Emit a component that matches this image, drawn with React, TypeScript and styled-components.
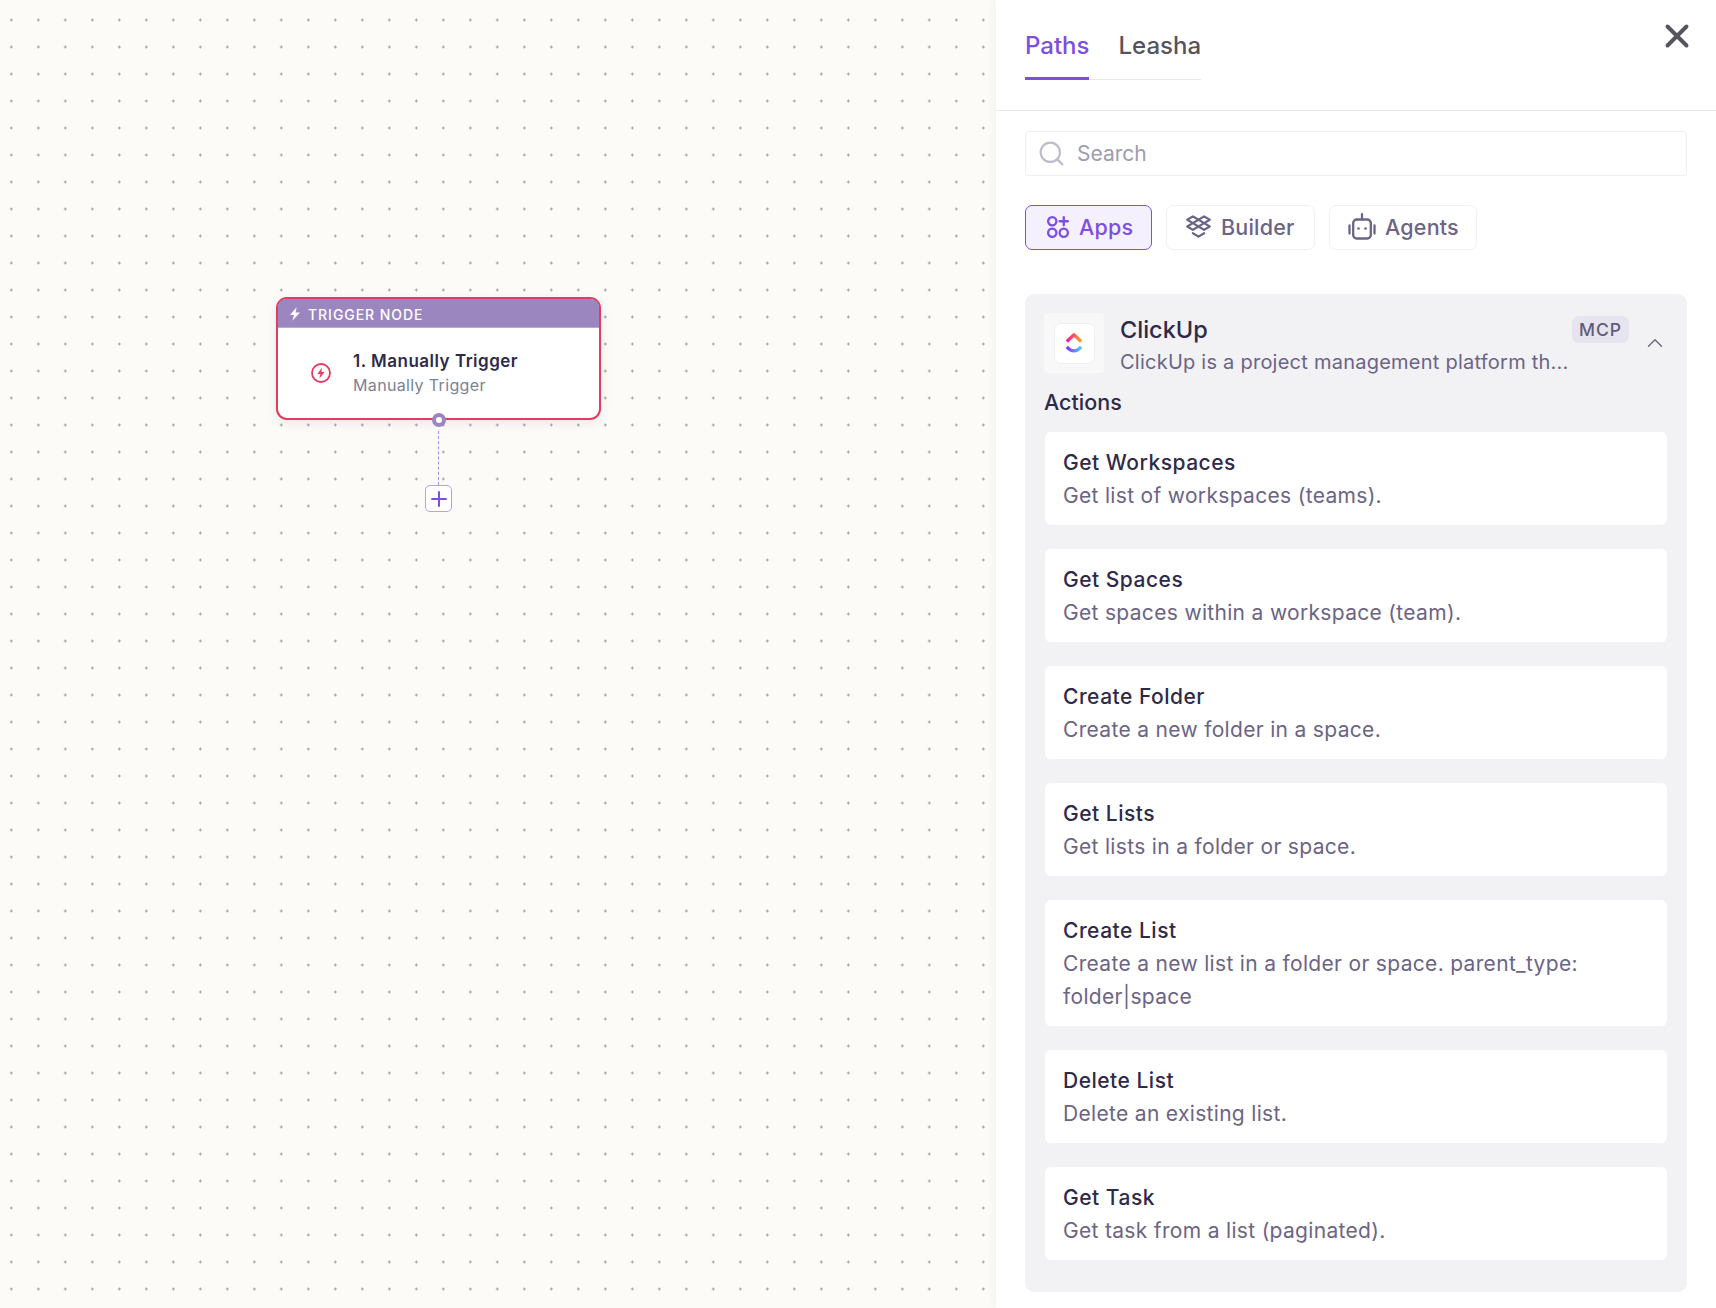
import React from "react";
import styled, { createGlobalStyle } from "styled-components";
import { Search, X, ChevronUp, Plus } from "lucide-react";

const Global = createGlobalStyle`
  html, body { margin: 0; padding: 0; height: 100%; }
  body { font-family: "Inter", "Liberation Sans", sans-serif; background: #fff; }
  * { box-sizing: border-box; }
`;

const Page = styled.div`
  display: flex;
  width: 100%;
  height: 1308px;
  overflow: hidden;
`;

const Canvas = styled.div`
  position: relative;
  flex: 0 0 996px;
  background-color: #fcfbf8;
  background-image: radial-gradient(circle, #a3a3a3 1px, transparent 1.2px);
  background-size: 27px 27px;
  background-position: -2.2px 6.5px;
`;

const Node = styled.div`
  position: absolute;
  left: 276px;
  top: 297px;
  width: 325px;
  height: 123px;
  background: #fff;
  border: 2px solid #e23d5e;
  border-radius: 11px;
  box-shadow: 0 3px 12px rgba(40, 30, 60, 0.08);
`;

const NodeHeader = styled.div`
  display: flex;
  align-items: center;
  gap: 7px;
  height: 29px;
  padding: 2px 0 0 11px;
  background: #9c86c0;
  border-radius: 8px 8px 0 0;
  border-bottom: 1px solid #b9a9d4;
  color: #fff;
  font-size: 14px;
  font-weight: 500;
  letter-spacing: 0.95px;
`;

const NodeBody = styled.div`
  display: flex;
  align-items: center;
  height: 90px;
  padding: 0 0 1px 32px;
  gap: 21px;
`;

const NodeText = styled.div`
  display: flex;
  flex-direction: column;
  gap: 1px;
`;

const NodeTitle = styled.div`
  font-size: 17px;
  line-height: 23px;
  font-weight: 600;
  letter-spacing: 0.5px;
  color: #2e2a4a;
`;

const NodeSub = styled.div`
  font-size: 16px;
  line-height: 22px;
  letter-spacing: 0.35px;
  color: #7a8299;
`;

const Port = styled.div`
  position: absolute;
  left: 153.5px;
  bottom: -8.5px;
  width: 14px;
  height: 14px;
  border-radius: 50%;
  background: #fff;
  border: 4px solid #9c86c0;
`;

const Connector = styled.div`
  position: absolute;
  left: 438px;
  top: 431px;
  height: 54px;
  border-left: 1px dashed #a78bec;
`;

const AddButton = styled.button`
  position: absolute;
  left: 425px;
  top: 485px;
  width: 27px;
  height: 27px;
  padding: 0;
  display: flex;
  align-items: center;
  justify-content: center;
  background: #fff;
  border: 1.5px solid #b49ff0;
  border-radius: 5px;
  color: #7c4fe0;
`;

const Panel = styled.div`
  flex: 1;
  position: relative;
  background: #fff;
  box-shadow: -3px 0 8px rgba(60, 50, 30, 0.04);
`;

const TopBar = styled.div`
  height: 111px;
  padding: 25px 29px 0;
  border-bottom: 1.5px solid #e8e8ec;
  display: flex;
  justify-content: space-between;
  align-items: flex-start;
`;

const Tabs = styled.div`
  display: flex;
  gap: 29px;
  height: 55px;
  border-bottom: 1.5px solid #e8e6ef;
`;

const Tab = styled.div<{ $active?: boolean }>`
  height: 55px;
  font-size: 24px;
  line-height: 41px;
  font-weight: 500;
  color: ${(p) => (p.$active ? "#7c4fe0" : "#55535f")};
  border-bottom: ${(p) => (p.$active ? "3px solid #7c4fe0" : "none")};
`;

const CloseButton = styled.div`
  position: absolute;
  right: 20px;
  top: 17px;
  display: flex;
  color: #55555f;
`;

const Content = styled.div`
  padding: 20px 29px 0;
`;

const SearchBox = styled.div`
  display: flex;
  align-items: center;
  gap: 11px;
  height: 45px;
  padding-left: 11px;
  border: 1px solid #eeeef2;
  border-radius: 4px;
  color: #bdbdc9;
`;

const SearchText = styled.span`
  font-size: 21px;
  color: #9d9dae;
`;

const Chips = styled.div`
  display: flex;
  gap: 14px;
  margin-top: 29px;
`;

const Chip = styled.div<{ $active?: boolean; $w: number }>`
  display: flex;
  align-items: center;
  gap: 9px;
  width: ${(p) => p.$w}px;
  height: 45px;
  padding: 0 0 2px ${(p) => (p.$active ? 20 : 18)}px;
  font-size: 21.5px;
  font-weight: 500;
  letter-spacing: 0.2px;
  border-radius: 7px;
  border: 1px solid ${(p) => (p.$active ? "#7c4fe0" : "#f0f0f4")};
  background: ${(p) => (p.$active ? "#f4f0fe" : "#fff")};
  color: ${(p) => (p.$active ? "#7c4fe0" : "#6b6485")};
`;

const Card = styled.div`
  margin-top: 44px;
  padding: 19px 20px 32px 19px;
  background: #f2f2f5;
  border-radius: 9px;
`;

const CardHead = styled.div`
  position: relative;
  display: flex;
  gap: 16px;
  height: 61px;
`;

const LogoBox = styled.div`
  flex: 0 0 60px;
  height: 60px;
  display: flex;
  align-items: center;
  justify-content: center;
  background: #f8f8f9;
  border-radius: 4px;
`;

const LogoInner = styled.div`
  width: 41px;
  height: 41px;
  display: flex;
  align-items: center;
  justify-content: center;
  background: #fff;
  border: 1.5px solid #efeff3;
  border-radius: 7px;
`;

const HeadText = styled.div`
  display: flex;
  flex-direction: column;
  width: 460px;
`;

const AppName = styled.div`
  font-size: 23.5px;
  line-height: 33px;
  font-weight: 500;
  color: #2e2a4a;
`;

const AppDesc = styled.div`
  margin-top: 2px;
  font-size: 20px;
  line-height: 28px;
  letter-spacing: 0.24px;
  color: #6b6485;
  white-space: nowrap;
  overflow: hidden;
`;

const Badge = styled.div`
  position: absolute;
  left: 528px;
  top: 3px;
  width: 57px;
  height: 27px;
  display: flex;
  align-items: center;
  justify-content: center;
  background: #e6e4ee;
  border-radius: 7px;
  font-size: 17.5px;
  font-weight: 500;
  letter-spacing: 1px;
  color: #5f5a78;
`;

const Chevron = styled.div`
  position: absolute;
  left: 598px;
  top: 17px;
  display: flex;
  color: #6b6b7a;
`;

const SectionLabel = styled.div`
  margin-top: 14px;
  height: 28px;
  font-size: 21.5px;
  line-height: 28px;
  font-weight: 500;
  color: #2e2a4a;
`;

const List = styled.div`
  display: flex;
  flex-direction: column;
  gap: 24px;
  margin: 16px 0 0 1px;
`;

const Item = styled.div`
  padding: 16px 18px 13px;
  background: #fff;
  border-radius: 6px;
`;

const ItemTitle = styled.div`
  font-size: 21px;
  line-height: 30px;
  font-weight: 500;
  letter-spacing: 0.5px;
  color: #2e2a4a;
`;

const ItemDesc = styled.div`
  margin-top: 1px;
  font-size: 21px;
  line-height: 33px;
  letter-spacing: 0.32px;
  color: #6b6485;
`;

const AppsIcon = () => (
  <svg width="24" height="24" viewBox="0 0 25 25" fill="none" stroke="currentColor" strokeWidth="2.4" strokeLinecap="round">
    <circle cx="6.5" cy="6.5" r="4.3" />
    <circle cx="6.5" cy="18.5" r="4.3" />
    <circle cx="18.5" cy="18.5" r="4.3" />
    <path d="M18.5 2.2v8.6M14.2 6.5h8.6" />
  </svg>
);

const DropboxIcon = () => (
  <svg width="27" height="27" viewBox="0 0 24 24" fill="none" stroke="currentColor" strokeWidth="2" strokeLinejoin="round" strokeLinecap="round">
    <path d="M12 6 7 9l5 3-5 3-5-3 5-3-5-3 5-3z" />
    <path d="M12 6l5 3-5 3 5 3 5-3-5-3 5-3-5-3z" />
    <path d="M7 18l5 3 5-3" />
  </svg>
);

const RobotIcon = () => (
  <svg width="28" height="28" viewBox="0 0 28 28" fill="none" stroke="currentColor" strokeWidth="2.3" strokeLinecap="round">
    <rect x="5.2" y="6.5" width="17.6" height="19" rx="3.5" />
    <path d="M14 1.2v5M1.5 12.5v8M26.5 12.5v8" />
    <circle cx="10.5" cy="15.5" r="1.3" fill="currentColor" stroke="none" />
    <circle cx="17.5" cy="15.5" r="1.3" fill="currentColor" stroke="none" />
  </svg>
);

const BoltSmall = () => (
  <svg width="12" height="14" viewBox="0 0 12 14" fill="#fff">
    <path d="M7.6 0.3 1 8h4l-1.6 5.7L11 5.6H6.6z" />
  </svg>
);

const BoltCircle = () => (
  <svg width="22" height="22" viewBox="0 0 22 22" fill="none">
    <circle cx="11" cy="11" r="9" stroke="#e23d5e" strokeWidth="1.8" />
    <path d="M12 5.5 7.4 12h3l-1 4.5L14.6 10h-3.2z" fill="#e23d5e" />
  </svg>
);

const ClickUpLogo = () => (
  <svg width="18" height="21.6" viewBox="0 0 20 24" fill="none">
    <defs>
      <linearGradient id="cuTop" x1="0" y1="0" x2="1" y2="0">
        <stop offset="0" stopColor="#fa12a4" />
        <stop offset="1" stopColor="#ffa114" />
      </linearGradient>
      <linearGradient id="cuBot" x1="0" y1="0" x2="1" y2="0">
        <stop offset="0" stopColor="#8930fd" />
        <stop offset="1" stopColor="#49ccf9" />
      </linearGradient>
    </defs>
    <path d="M2 10.5 10 3l8 7.500" stroke="url(#cuTop)" strokeWidth="3.6" strokeLinejoin="round" />
    <path d="M2 16.500c2.400 2.600 5 4.500 8 4.500s5.600-1.900 8-4.500" stroke="url(#cuBot)" strokeWidth="3.6" />
  </svg>
);

const actions = [
  ["Get Workspaces", "Get list of workspaces (teams)."],
  ["Get Spaces", "Get spaces within a workspace (team)."],
  ["Create Folder", "Create a new folder in a space."],
  ["Get Lists", "Get lists in a folder or space."],
  ["Create List", "Create a new list in a folder or space. parent_type: folder|space"],
  ["Delete List", "Delete an existing list."],
  ["Get Task", "Get task from a list (paginated)."],
];

export default function App() {
  return (
    <Page>
      <Global />
      <Canvas>
        <Node>
          <NodeHeader>
            <BoltSmall />
            TRIGGER NODE
          </NodeHeader>
          <NodeBody>
            <BoltCircle />
            <NodeText>
              <NodeTitle>1. Manually Trigger</NodeTitle>
              <NodeSub>Manually Trigger</NodeSub>
            </NodeText>
          </NodeBody>
          <Port />
        </Node>
        <Connector />
        <AddButton>
          <Plus size={24} strokeWidth={2} />
        </AddButton>
      </Canvas>
      <Panel>
        <TopBar>
          <Tabs>
            <Tab $active>Paths</Tab>
            <Tab>Leasha</Tab>
          </Tabs>
        </TopBar>
        <CloseButton>
          <X size={38} strokeWidth={2.5} />
        </CloseButton>
        <Content>
          <SearchBox>
            <Search size={29} strokeWidth={1.8} />
            <SearchText>Search</SearchText>
          </SearchBox>
          <Chips>
            <Chip $active $w={127}>
              <AppsIcon />
              Apps
            </Chip>
            <Chip $w={149}>
              <DropboxIcon />
              Builder
            </Chip>
            <Chip $w={148}>
              <RobotIcon />
              Agents
            </Chip>
          </Chips>
          <Card>
            <CardHead>
              <LogoBox>
                <LogoInner>
                  <ClickUpLogo />
                </LogoInner>
              </LogoBox>
              <HeadText>
                <AppName>ClickUp</AppName>
                <AppDesc>ClickUp is a project management platform th...</AppDesc>
              </HeadText>
              <Badge>MCP</Badge>
              <Chevron>
                <ChevronUp size={26} strokeWidth={1.3} />
              </Chevron>
            </CardHead>
            <SectionLabel>Actions</SectionLabel>
            <List>
              {actions.map(([t, d]) => (
                <Item key={t}>
                  <ItemTitle>{t}</ItemTitle>
                  <ItemDesc>{d}</ItemDesc>
                </Item>
              ))}
            </List>
          </Card>
        </Content>
      </Panel>
    </Page>
  );
}
